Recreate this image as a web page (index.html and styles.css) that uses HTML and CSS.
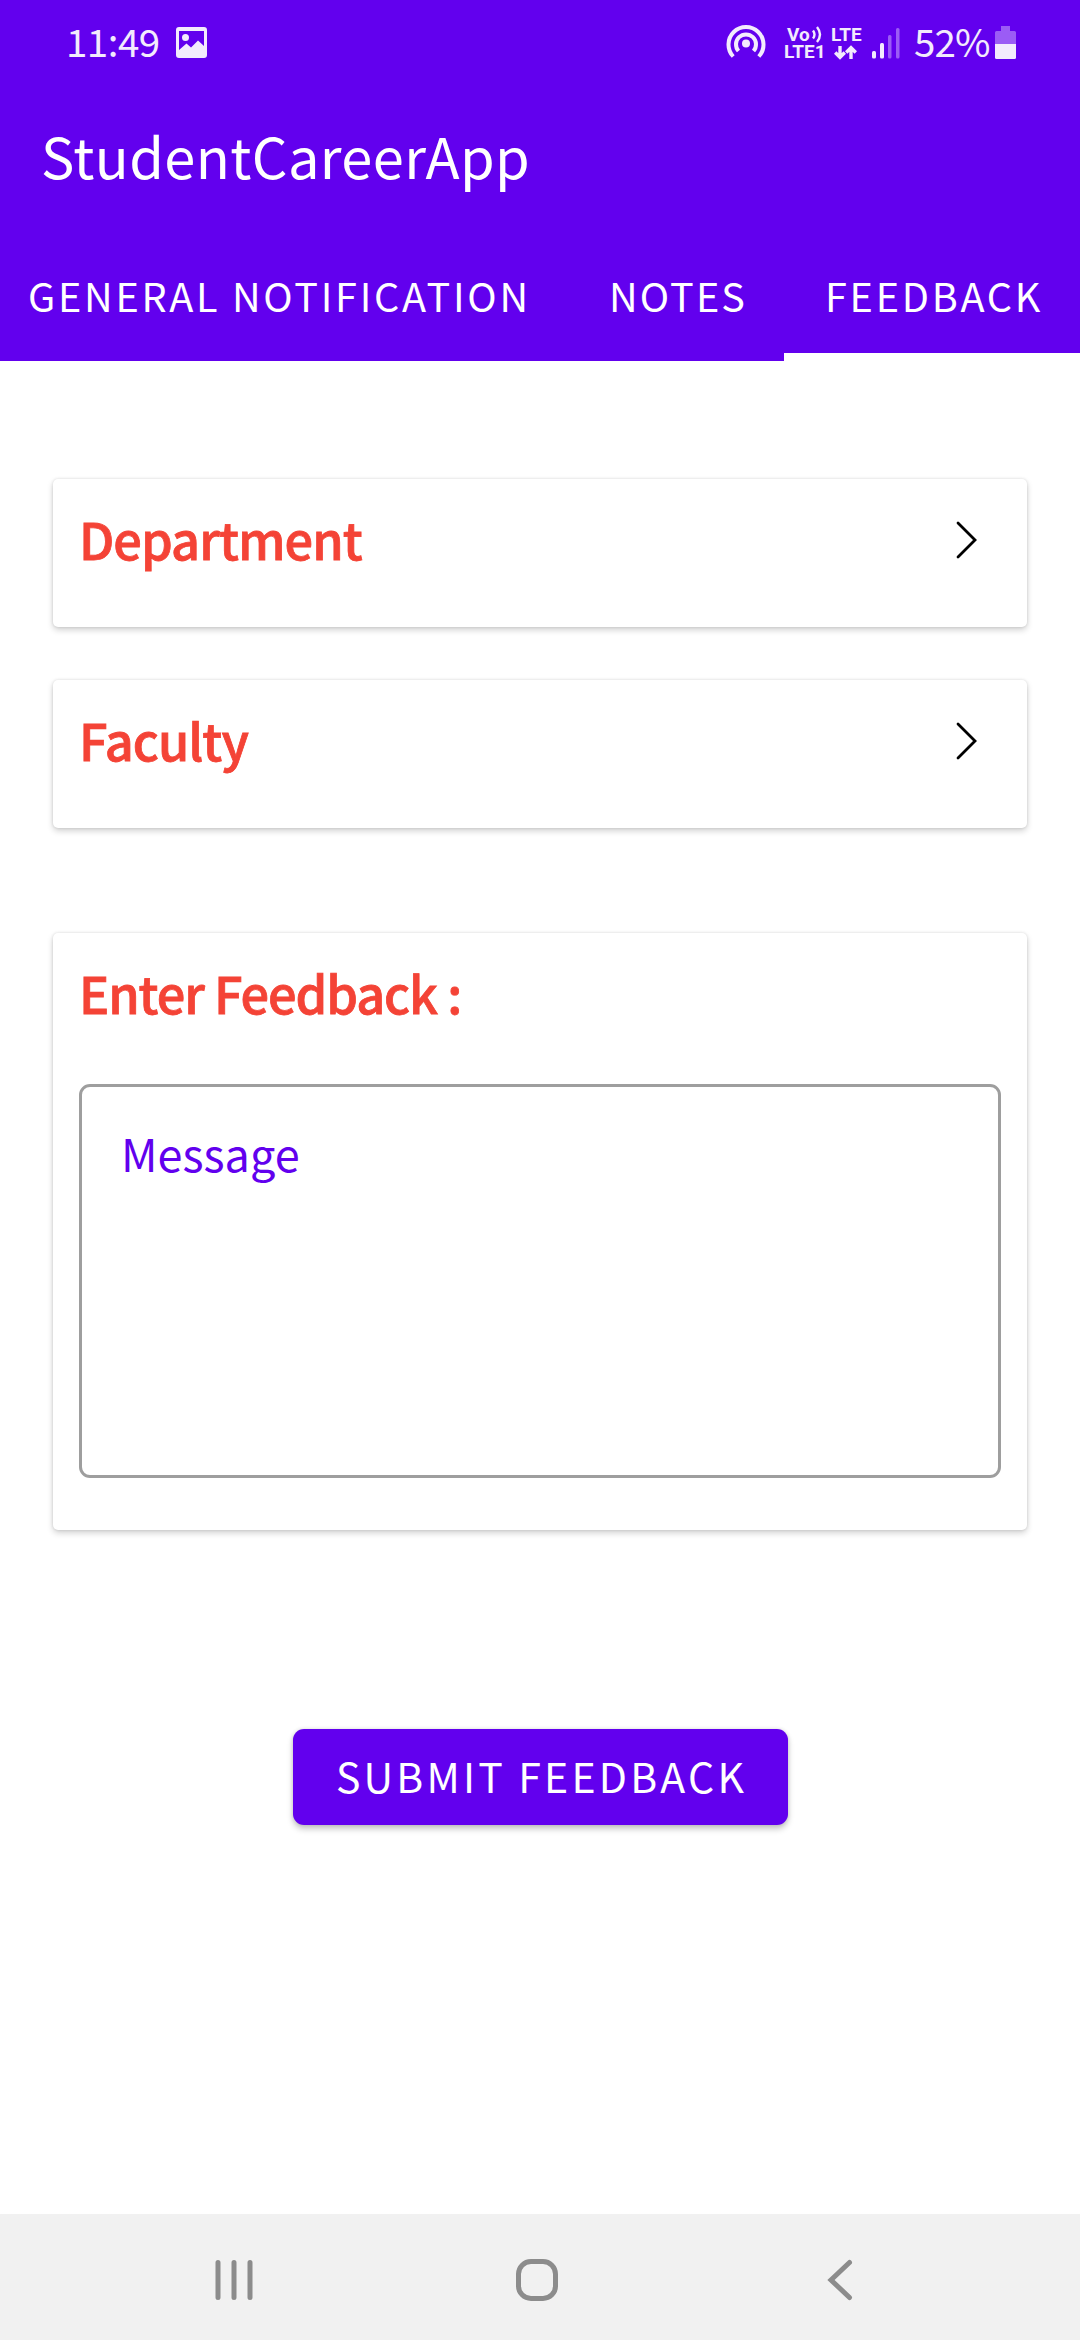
FILE: index.html
```
<!DOCTYPE html>
<html lang="en">
<head>
<meta charset="utf-8">
<title>StudentCareerApp</title>
<link rel="stylesheet" href="styles.css">
</head>
<body>
<div class="app">
  <header class="header">
    <div class="status">
      <span class="clock">11:49</span>
      <svg class="status-picture" viewBox="0 0 31 31" width="31" height="31"><path fill="#f3ebfd" fill-rule="evenodd" d="M3 0H28a3 3 0 0 1 3 3V28a3 3 0 0 1-3 3H3a3 3 0 0 1-3-3V3a3 3 0 0 1 3-3ZM3 4V23L10.500 16.500 15 20.500 22 13.500 28 19V4ZM9.500 7a3.500 3.500 0 1 1 0 7a3.500 3.500 0 1 1 0-7Z"/></svg>
      <span class="grow"></span>
      <svg class="status-hotspot" viewBox="0 0 40 36" width="40" height="36" fill="none" stroke="#f3ebfd" stroke-width="4"><path d="M7.200 32.500A17.500 17.500 0 1 1 32.800 32.500"/><path d="M12.500 27A10 10 0 1 1 27.500 27"/><circle cx="20" cy="19.500" r="4" fill="#f3ebfd" stroke="none"/></svg>
      <div class="volte">
        <span class="volte-top">Vo<svg viewBox="0 0 10 17" width="10" height="17" fill="none" stroke="#f3ebfd" stroke-width="2.400"><path d="M1 4.500Q4 8.500 1 12.500M5 1Q11 8.500 5 16"/></svg></span>
        <span>LTE1</span>
      </div>
      <div class="lte">
        <span>LTE</span>
        <svg viewBox="0 0 23 15" width="23" height="15" fill="none" stroke="#f3ebfd" stroke-width="3.400"><path d="M6 1V12M1.200 7.500 6 12.300 10.800 7.500M17 14V3M12.200 7.500 17 2.700 21.800 7.500"/></svg>
      </div>
      <svg class="status-signal" viewBox="0 0 28 31" width="28" height="31" fill="#f3ebfd"><rect x="0" y="23" width="4" height="7.500" rx="1.500"/><rect x="8" y="15" width="4" height="15.500" rx="1.500"/><g fill="#9b5cf5"><rect x="16" y="7" width="3.500" height="23.500" rx="1.500"/><rect x="24" y="0" width="3.500" height="30.500" rx="1.500"/></g></svg>
      <span class="percent">52%</span>
      <svg class="status-battery" viewBox="0 0 21 33" width="21" height="33"><path fill="#9b5cf5" d="M6 0H15V5H19.500a1.500 1.500 0 0 1 1.500 1.500V18H0V6.500A1.500 1.500 0 0 1 1.500 5H6Z"/><path fill="#f3ebfd" d="M0 18H21V31.500a1.500 1.500 0 0 1-1.500 1.500H1.500A1.500 1.500 0 0 1 0 31.500Z"/></svg>
    </div>
    <h1 class="title">StudentCareerApp</h1>
    <nav class="tabs">
      <a class="tab tab-general">GENERAL NOTIFICATION</a>
      <a class="tab tab-notes">NOTES</a>
      <a class="tab tab-feedback">FEEDBACK</a>
    </nav>
  </header>
  <main class="content">
    <section class="card picker">
      <h2 class="label">Department</h2>
      <svg class="chevron" viewBox="0 0 22 38" width="22" height="38"><path d="M2 2 19 19 2 36" fill="none" stroke="#000" stroke-width="2.800" stroke-linecap="round"/></svg>
    </section>
    <section class="card picker">
      <h2 class="label">Faculty</h2>
      <svg class="chevron" viewBox="0 0 22 38" width="22" height="38"><path d="M2 2 19 19 2 36" fill="none" stroke="#000" stroke-width="2.800" stroke-linecap="round"/></svg>
    </section>
    <section class="card feedback">
      <h2 class="label label-feedback">Enter Feedback :</h2>
      <div class="message">Message</div>
    </section>
    <button class="submit">SUBMIT FEEDBACK</button>
  </main>
  <footer class="navbar">
    <svg viewBox="0 0 44 44" width="44" height="44" fill="none" stroke="#8c8c8c" stroke-width="5" stroke-linecap="round"><path d="M6 4.500V39.500M22 4.500V39.500M38 4.500V39.500"/></svg>
    <svg viewBox="0 0 44 44" width="44" height="44" fill="none" stroke="#8c8c8c" stroke-width="5"><rect x="3.500" y="3.500" width="37" height="37" rx="12.500"/></svg>
    <svg viewBox="0 0 44 44" width="44" height="44" fill="none" stroke="#8c8c8c" stroke-width="5" stroke-linecap="round"><path d="M31.500 4.500 13 22 31.500 39.500"/></svg>
  </footer>
</div>
</body>
</html>
```

FILE: styles.css
```
* { box-sizing: border-box; }

body {
  margin: 0;
  background: #fff;
  font-family: "Noto Sans CJK SC", "Noto Sans", sans-serif;
}

svg { display: block; flex: none; }

.app {
  display: flex;
  flex-direction: column;
  width: 1080px;
  height: 2340px;
  overflow: hidden;
}

.header {
  background: #6200ee;
  color: #fff;
  height: 361px;
}

.status {
  display: flex;
  height: 80px;
  padding: 0 64px 0 66px;
  color: #f3ebfd;
  font-size: 38.500px;
  line-height: 80px;
}

.clock { width: 110px; letter-spacing: -0.500px; }
.grow { flex: 1; }
.status-picture { margin-top: 27px; }
.status-hotspot { margin: 24px 18px 0 0; }

.volte,
.lte {
  display: flex;
  flex-direction: column;
  margin-top: 26px;
  font-family: Roboto, sans-serif;
  font-size: 19px;
  font-weight: 700;
  line-height: 17px;
}

.volte { width: 47px; }
.volte-top { display: flex; padding-left: 3px; }
.volte-top svg { margin-left: 2px; }
.lte { width: 41px; }
.lte svg { margin: 2px 0 0 3px; }
.status-signal { margin: 28px 14px 0 0; }
.percent { width: 81px; letter-spacing: -0.900px; }
.status-battery { margin-top: 26px; }

.title {
  margin: 0;
  height: 148px;
  padding-left: 41px;
  font-size: 56px;
  font-weight: 400;
  line-height: 149px;
  letter-spacing: 0.400px;
}

.tabs {
  display: flex;
  height: 133px;
  font-size: 39.600px;
  line-height: 133px;
  letter-spacing: 2.750px;
  white-space: nowrap;
}

.tab { position: relative; height: 133px; }
.tab-general { width: 568px; padding-left: 28px; }
.tab-notes { width: 216px; padding-left: 41px; letter-spacing: 2.100px; }
.tab-feedback { width: 296px; padding-left: 41px; }

.tab-feedback::after {
  content: "";
  position: absolute;
  left: 0;
  right: 0;
  bottom: 0;
  height: 8px;
  background: #fff;
}

.content {
  flex: 1;
  display: flex;
  flex-direction: column;
  padding: 118px 53px 0;
}

.card {
  border-radius: 5px;
  background: #fff;
  box-shadow: 0 3px 6px rgba(0, 0, 0, 0.180), 0 0 3px rgba(0, 0, 0, 0.120);
}

.picker {
  display: flex;
  justify-content: space-between;
  height: 148px;
  margin-bottom: 53px;
  padding: 0 49px 0 26px;
}

.label {
  margin: 0;
  color: #f44336;
  font-size: 50.500px;
  font-weight: 500;
  line-height: 118px;
  letter-spacing: -0.950px;
  -webkit-text-stroke: 0.800px #f44336;
}

.label-feedback { letter-spacing: -1.100px; }

.chevron { margin-top: 42px; }

.feedback {
  height: 597px;
  margin-top: 52px;
  padding: 0 26px;
}

.message {
  height: 394px;
  margin-top: 33px;
  padding: 36px 39px;
  border: 3px solid #9e9e9e;
  border-radius: 11px;
  color: #6200ee;
  font-size: 45px;
  line-height: 60px;
}

.submit {
  align-self: center;
  width: 495px;
  height: 96px;
  margin-top: 199px;
  padding: 0 0 4px 3px;
  border: 0;
  border-radius: 11px;
  background: #6200ee;
  box-shadow: 0 4px 6px rgba(0, 0, 0, 0.220), 0 0 4px rgba(0, 0, 0, 0.120);
  color: #fff;
  font: 400 41px/92px "Noto Sans CJK SC", "Noto Sans", sans-serif;
  letter-spacing: 3.200px;
  white-space: nowrap;
}

.navbar {
  display: flex;
  justify-content: space-between;
  height: 126px;
  padding: 44px 218px 0 212px;
  background: #f1f1f1;
}
```
